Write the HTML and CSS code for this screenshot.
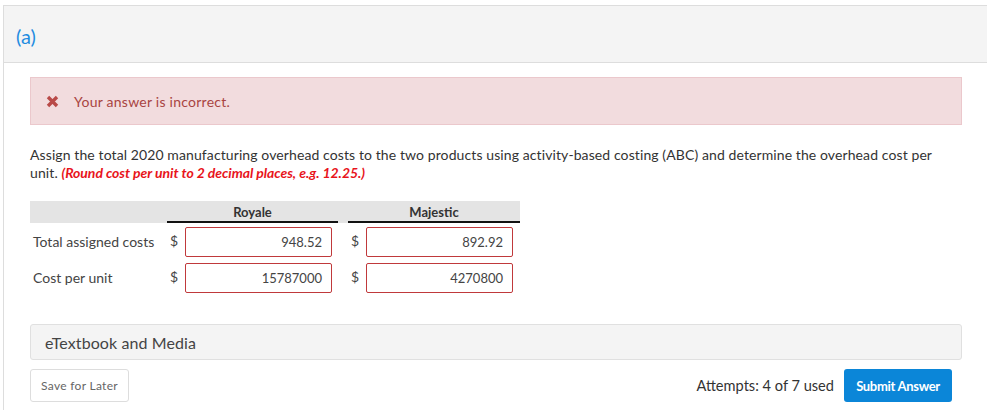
FILE: index.html
```html
<!DOCTYPE html>
<html>
<head>
<meta charset="utf-8">
<link rel="stylesheet" href="styles.css">
</head>
<body>
<div class="panel">
  <div class="panel-head">(a)</div>
  <div class="panel-body">
    <div class="alert">
      <svg class="x-icon" width="13" height="13" viewBox="0 0 13 13"><path d="M2 2 L11 11 M11 2 L2 11" stroke="#b94a48" stroke-width="3.4" stroke-linecap="butt"/></svg>
      <span>Your answer is incorrect.</span>
    </div>
    <p class="question">Assign the total 2020 manufacturing overhead costs to the two products using activity-based costing (ABC) and determine the overhead cost per unit. <em class="hint">(Round cost per unit to 2 decimal places, e.g. 12.25.)</em></p>
    <div class="abc">
      <div class="abc-head">
        <div class="label-col"></div>
        <div class="col-head c1">Royale</div>
        <div class="col-head c2">Majestic</div>
      </div>
      <div class="abc-row">
        <div class="label-col">Total assigned costs</div>
        <div class="cell c1"><span class="cur">$</span><div class="inp">948.52</div></div>
        <div class="cell c2"><span class="cur">$</span><div class="inp">892.92</div></div>
      </div>
      <div class="abc-row">
        <div class="label-col">Cost per unit</div>
        <div class="cell c1"><span class="cur">$</span><div class="inp">15787000</div></div>
        <div class="cell c2"><span class="cur">$</span><div class="inp">4270800</div></div>
      </div>
    </div>
    <div class="media">eTextbook and Media</div>
    <div class="actions">
      <button class="btn-save">Save for Later</button>
      <div class="right">
        <span class="attempts">Attempts: 4 of 7 used</span>
        <button class="btn-submit">Submit Answer</button>
      </div>
    </div>
  </div>
</div>
</body>
</html>
```
FILE: styles.css
```css
html, body {
  margin: 0;
  padding: 0;
  background: #fff;
  font-family: Lato, "Liberation Sans", sans-serif;
  color: #333;
}
.panel {
  margin: 5px 0 0 3px;
  border: 1px solid #ddd;
  border-right: none;
  height: 420px;
}
.panel-head {
  background: #f4f4f4;
  height: 57px;
  border-bottom: 1px solid #ddd;
  box-sizing: border-box;
  padding: 18px 0 0 12px;
  font-size: 20px;
  color: #1f8ce0;
  line-height: 24px;
}
.panel-body {
  padding: 14px 25px 0 26px;
}
.alert {
  height: 48px;
  box-sizing: border-box;
  background: #f2dcde;
  border: 1px solid #ebc8cc;
  display: flex;
  align-items: center;
  padding-left: 15px;
  font-size: 14px;
  letter-spacing: 0.25px;
  color: #a94442;
}
.x-icon {
  margin-right: 15px;
  margin-top: 1px;
}
.question {
  margin: 21px 0 0 0;
  padding-right: 18px;
  font-size: 14px;
  letter-spacing: 0.1px;
  line-height: 18px;
  color: #333;
}
.hint {
  color: #e8141b;
  font-weight: bold;
  font-style: italic;
  letter-spacing: -0.05px;
}
.abc {
  margin-top: 19px;
  width: 490px;
}
.abc-head {
  display: flex;
  background: #e4e4e4;
  height: 22px;
  column-gap: 10px;
}
.label-col {
  width: 127px;
  flex: none;
  box-sizing: border-box;
}
.col-head {
  box-sizing: border-box;
  border-bottom: 2px solid #111;
  font-size: 13px;
  font-weight: bold;
  color: #333;
  text-align: center;
  line-height: 22px;
}
.c1 { width: 171px; }
.c2 { width: 172px; }
.abc-row {
  display: flex;
  height: 30px;
  column-gap: 10px;
  margin-top: 4px;
}
.abc-row + .abc-row {
  margin-top: 6px;
}
.abc-row .label-col {
  padding-left: 3px;
  font-size: 14px;
  color: #444;
  line-height: 30px;
}
.cell {
  display: flex;
  flex: none;
}
.cur {
  width: 18px;
  padding-left: 3px;
  box-sizing: border-box;
  font-size: 14px;
  color: #444;
  line-height: 28px;
}
.inp {
  width: 147px;
  height: 30px;
  box-sizing: border-box;
  border: 1px solid #c0393b;
  border-radius: 2px;
  text-align: right;
  padding-right: 9px;
  font-size: 13px;
  line-height: 28px;
  color: #444;
}
.media {
  margin-top: 31px;
  height: 36px;
  box-sizing: border-box;
  background: #f4f4f4;
  border: 1px solid #e0e0e0;
  border-radius: 3px;
  padding-left: 14px;
  font-size: 16px;
  letter-spacing: 0.1px;
  line-height: 35px;
  color: #444;
}
.actions {
  margin-top: 9px;
  padding-right: 10px;
  display: flex;
  justify-content: space-between;
  align-items: center;
}
.btn-save {
  width: 99px;
  height: 33px;
  background: #fff;
  border: 1px solid #ddd;
  border-radius: 3px;
  font-family: Lato, "Liberation Sans", sans-serif;
  font-size: 12px;
  letter-spacing: 0.3px;
  color: #666;
  padding: 0;
}
.right {
  display: flex;
  align-items: center;
  column-gap: 10px;
}
.attempts {
  font-size: 14.6px;
  color: #333;
}
.btn-submit {
  width: 108px;
  height: 33px;
  background: #0b86d8;
  border: none;
  border-radius: 3px;
  color: #fff;
  font-family: Lato, "Liberation Sans", sans-serif;
  font-size: 13px;
  font-weight: bold;
  letter-spacing: -0.3px;
  padding: 0;
}
```
